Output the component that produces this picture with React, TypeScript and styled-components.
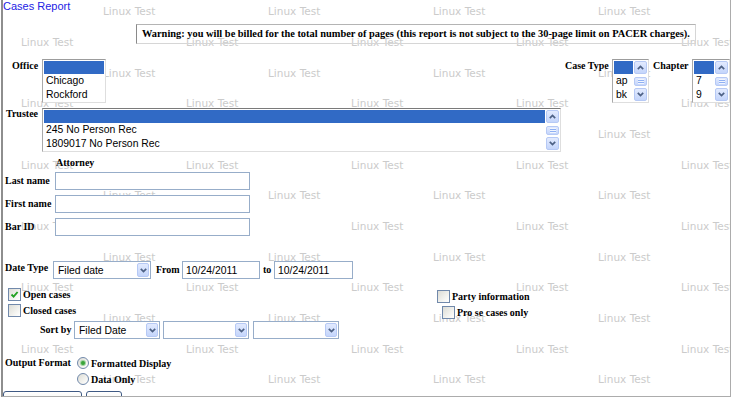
import React from "react";
import styled, { createGlobalStyle } from "styled-components";

const GlobalStyle = createGlobalStyle`
  html, body {
    margin: 0;
    padding: 0;
    background: #fff;
  }
  body {
    width: 733px;
    height: 398px;
    overflow: hidden;
  }
`;

const serif = `"Liberation Serif", "Times New Roman", serif`;
const sans = `"Liberation Sans", Arial, sans-serif`;

const Frame = styled.div`
  position: relative;
  box-sizing: border-box;
  width: 730px;
  height: 397px;
  margin-left: 1px;
  border-left: 2px solid #8e8e8e;
  border-right: 1px solid #acacac;
  border-bottom: 1px solid #acacac;
  overflow: hidden;
  background: #fff;
`;

const Watermark = styled.div`
  position: absolute;
  left: -3px;
  top: -4px;
  z-index: 0;
  pointer-events: none;
`;

const WatermarkRow = styled.div<{ $offset: number }>`
  display: flex;
  align-items: center;
  height: 30.67px;
  padding-left: ${p => p.$offset}px;
`;

const WatermarkText = styled.span`
  flex: 0 0 165px;
  font: 10.5px "DejaVu Sans", sans-serif;
  color: #cbcbcb;
  white-space: nowrap;
`;

const Content = styled.div`
  position: relative;
  z-index: 1;
`;

const Title = styled.div`
  font: 11px ${sans};
  line-height: 13px;
  color: #2323e4;
`;

const Warning = styled.div`
  box-sizing: border-box;
  width: 560px;
  height: 20px;
  margin: 11px 0 0 133px;
  padding-left: 5px;
  border: 1px solid;
  border-color: #b4b4b4 #d6d6d6 #d6d6d6 #8a8a8a;
  font: bold 10.4px ${serif};
  line-height: 18px;
  white-space: nowrap;
`;

const Row = styled.div<{ $mt?: number; $indent?: number; $align?: string }>`
  display: flex;
  align-items: ${p => p.$align ?? "center"};
  margin-top: ${p => p.$mt ?? 0}px;
  padding-left: ${p => p.$indent ?? 0}px;
`;

const SplitRow = styled(Row)`
  justify-content: space-between;
`;

const Group = styled.div`
  display: flex;
  align-items: flex-start;
`;

const FieldLabel = styled.span<{ $width?: number; $pad?: number; $mt?: number; $mb?: number }>`
  flex: 0 0 ${p => (p.$width ? `${p.$width}px` : "auto")};
  box-sizing: border-box;
  padding-left: ${p => p.$pad ?? 0}px;
  margin-top: ${p => p.$mt ?? 0}px;
  margin-bottom: ${p => p.$mb ?? 0}px;
  font: bold 10px ${serif};
  line-height: 12px;
  color: #000;
  white-space: nowrap;
`;

const ListBox = styled.div<{ $width: number; $top?: string }>`
  box-sizing: border-box;
  display: flex;
  width: ${p => p.$width}px;
  height: 44px;
  padding: 1px;
  border: 1px solid;
  border-color: ${p => p.$top ?? "#9c9c9c"} #dedede #dedede #a9a9a9;
  background: #fff;
`;

const Options = styled.div`
  flex: 1;
  min-width: 0;
`;

const Option = styled.div<{ $selected?: boolean }>`
  height: 13.33px;
  padding-left: 2px;
  font: 10.4px ${sans};
  line-height: 13.33px;
  background: ${p => (p.$selected ? "#316ac5" : "transparent")};
  color: ${p => (p.$selected ? "#fff" : "#000")};
  white-space: nowrap;
  overflow: hidden;
`;

const ScrollTrack = styled.div`
  display: flex;
  flex-direction: column;
  justify-content: space-between;
  width: 13px;
  margin-left: 1px;
`;

const XpButton = styled.span<{ $h?: number; $w?: number }>`
  box-sizing: border-box;
  display: flex;
  align-items: center;
  justify-content: center;
  width: ${p => p.$w ?? 13}px;
  height: ${p => p.$h ?? 13}px;
  border: 1px solid #b6c9f5;
  border-radius: 2px;
  background: linear-gradient(180deg, #e2eafe 0%, #c4d5fb 100%);
`;

const Grip = styled.span`
  width: 6px;
  height: 5px;
  background: repeating-linear-gradient(180deg, #f1f5fe 0 1px, #8fb0f3 1px 2px);
`;

const Chevron = ({ up }: { up?: boolean }) => (
  <svg width="7" height="5" viewBox="0 0 7 5">
    <polyline
      points={up ? "0.8,4.2 3.5,1.4 6.2,4.2" : "0.8,0.8 3.5,3.6 6.2,0.8"}
      fill="none"
      stroke="#4d6185"
      strokeWidth="1.7"
    />
  </svg>
);

const ScrollBar = () => (
  <ScrollTrack>
    <XpButton>
      <Chevron up />
    </XpButton>
    <XpButton $h={9}>
      <Grip />
    </XpButton>
    <XpButton>
      <Chevron />
    </XpButton>
  </ScrollTrack>
);

const List = ({ width, items, scroll, top }: { width: number; items: string[]; scroll?: boolean; top?: string }) => (
  <ListBox $width={width} $top={top}>
    <Options>
      <Option $selected>&nbsp;</Option>
      {items.map(i => (
        <Option key={i}>{i}</Option>
      ))}
    </Options>
    {scroll && <ScrollBar />}
  </ListBox>
);

const AttorneyTitle = styled.div`
  margin: 5px 0 0 53px;
  font: bold 10px ${serif};
  line-height: 12px;
`;

const FieldGrid = styled.div`
  display: grid;
  grid-template-columns: 50px 195px;
  row-gap: 5px;
  align-items: center;
  margin: 3px 0 0 2px;
`;

const TextInput = styled.input<{ $width: number }>`
  box-sizing: border-box;
  width: ${p => p.$width}px;
  height: 18px;
  margin: 0;
  padding: 0 3px;
  border: 1px solid #97adc9;
  font: 10.4px ${sans};
  color: #000;
  background: #fff;
  outline: none;
`;

const SelectBox = styled.div<{ $width: number }>`
  box-sizing: border-box;
  display: flex;
  align-items: center;
  width: ${p => p.$width}px;
  height: 18px;
  padding: 1px;
  border: 1px solid #97adc9;
  background: #fff;
`;

const SelectText = styled.span`
  flex: 1;
  padding-left: 3px;
  font: 10.4px ${sans};
  white-space: nowrap;
`;

const Dropdown = ({ width, value, mr }: { width: number; value?: string; mr?: number }) => (
  <SelectBox $width={width} style={mr ? { marginRight: mr } : undefined}>
    <SelectText>{value}</SelectText>
    <XpButton $w={12} $h={14}>
      <Chevron />
    </XpButton>
  </SelectBox>
);

const Column = styled.div<{ $width?: number; $mt?: number }>`
  display: flex;
  flex-direction: column;
  flex: 0 0 ${p => (p.$width ? `${p.$width}px` : "auto")};
  margin-top: ${p => p.$mt ?? 0}px;
`;

const CheckRow = styled.label<{ $indent?: number }>`
  display: flex;
  align-items: center;
  gap: 2px;
  height: 16px;
  padding-left: ${p => p.$indent ?? 0}px;
  font: bold 10px ${serif};
  white-space: nowrap;
`;

const CheckBox = styled.span`
  box-sizing: border-box;
  display: inline-flex;
  align-items: center;
  justify-content: center;
  width: 13px;
  height: 13px;
  border: 1px solid #7189ab;
  background: linear-gradient(135deg, #dcdcd5 0%, #f6f6f3 70%, #fff 100%);
`;

const Radio = styled.span`
  box-sizing: border-box;
  display: inline-flex;
  align-items: center;
  justify-content: center;
  width: 12px;
  height: 12px;
  border: 1px solid #7189ab;
  border-radius: 50%;
  background: linear-gradient(135deg, #dcdcd5 0%, #f6f6f3 70%, #fff 100%);
`;

const RadioDot = styled.span`
  width: 4px;
  height: 4px;
  border-radius: 50%;
  background: #3aa43a;
  box-shadow: 0 0 0 1px #9fd39f;
`;

const Check = () => (
  <svg width="9" height="9" viewBox="0 0 9 9">
    <polyline points="1.5,4.5 3.6,6.6 7.6,2" fill="none" stroke="#21a121" strokeWidth="1.9" />
  </svg>
);

const ButtonRow = styled.div`
  display: flex;
  gap: 4px;
  margin-top: 4px;
`;

const PushButton = styled.button<{ $width: number }>`
  box-sizing: border-box;
  width: ${p => p.$width}px;
  height: 23px;
  padding: 0;
  border: 1px solid #3f5a84;
  border-radius: 3px;
  background: linear-gradient(180deg, #ffffff 0%, #f2f1ea 60%, #e3e0d2 100%);
  font: 10.4px ${sans};
  color: #000;
`;

export default function App() {
  return (
    <>
      <GlobalStyle />
      <Frame>
        <Watermark aria-hidden>
          {Array.from({ length: 14 }, (_, i) => (
            <WatermarkRow key={i} $offset={i % 2 === 0 ? 103 : 21}>
              {Array.from({ length: 5 }, (_, j) => (
                <WatermarkText key={j}>Linux Test</WatermarkText>
              ))}
            </WatermarkRow>
          ))}
        </Watermark>

        <Content>
          <Title>Cases Report</Title>
          <Warning>
            Warning: you will be billed for the total number of pages (this report is not subject to the 30-page limit on PACER charges).
          </Warning>

          <SplitRow $mt={15} $align="flex-start">
            <Group style={{ paddingLeft: 9 }}>
              <FieldLabel $width={30} $mt={1}>Office</FieldLabel>
              <List width={64} items={["Chicago", "Rockford"]} />
            </Group>
            <Group>
              <FieldLabel $width={47} $mt={1}>Case Type</FieldLabel>
              <List width={37} items={["ap", "bk"]} scroll />
              <FieldLabel $width={43} $pad={4} $mt={1}>Chapter</FieldLabel>
              <List width={38} items={["7", "9"]} scroll />
            </Group>
          </SplitRow>

          <Row $mt={5} $indent={3} $align="flex-start">
            <FieldLabel $width={36} $mt={0}>Trustee</FieldLabel>
            <List width={519} items={["245 No Person Rec", "1809017 No Person Rec"]} scroll top="#7a7a7a" />
          </Row>

          <AttorneyTitle>Attorney</AttorneyTitle>
          <FieldGrid>
            <FieldLabel>Last name</FieldLabel>
            <TextInput $width={195} readOnly />
            <FieldLabel>First name</FieldLabel>
            <TextInput $width={195} readOnly />
            <FieldLabel>Bar ID</FieldLabel>
            <TextInput $width={195} readOnly />
          </FieldGrid>

          <Row $mt={25} $indent={2}>
            <FieldLabel $width={48} $mb={5}>Date Type</FieldLabel>
            <Dropdown width={98} value="Filed date" />
            <FieldLabel $width={31} $pad={5}>From</FieldLabel>
            <TextInput $width={78} defaultValue="10/24/2011" readOnly />
            <FieldLabel $width={14} $pad={3}>to</FieldLabel>
            <TextInput $width={79} defaultValue="10/24/2011" readOnly />
          </Row>

          <Row $mt={7} $indent={5} $align="flex-start">
            <Column $width={429}>
              <CheckRow>
                <CheckBox>
                  <Check />
                </CheckBox>
                Open cases
              </CheckRow>
              <CheckRow>
                <CheckBox />
                Closed cases
              </CheckRow>
            </Column>
            <Column $mt={2}>
              <CheckRow>
                <CheckBox />
                Party information
              </CheckRow>
              <CheckRow $indent={5}>
                <CheckBox />
                Pro se cases only
              </CheckRow>
            </Column>
          </Row>

          <Row $mt={1} $indent={37}>
            <FieldLabel $width={34}>Sort by</FieldLabel>
            <Dropdown width={86} value="Filed Date" mr={3} />
            <Dropdown width={86} mr={4} />
            <Dropdown width={86} />
          </Row>

          <Row $mt={16} $indent={2} $align="flex-start">
            <FieldLabel $width={72} $mt={2}>Output Format</FieldLabel>
            <Column>
              <CheckRow>
                <Radio>
                  <RadioDot />
                </Radio>
                Formatted Display
              </CheckRow>
              <CheckRow>
                <Radio />
                Data Only
              </CheckRow>
            </Column>
          </Row>

          <ButtonRow>
            <PushButton $width={79}>Run Report</PushButton>
            <PushButton $width={36}>Clear</PushButton>
          </ButtonRow>
        </Content>
      </Frame>
    </>
  );
}
